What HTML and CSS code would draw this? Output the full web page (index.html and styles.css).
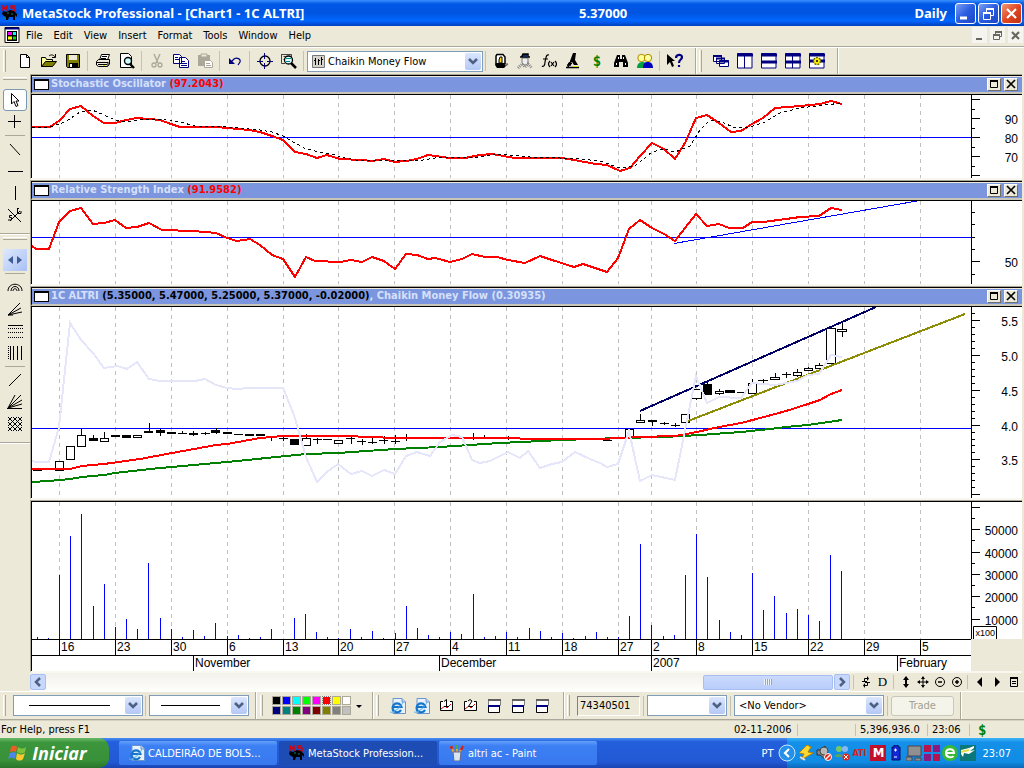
FILE: index.html
```html
<!DOCTYPE html>
<html lang="en">
  <head>
    <meta charset="UTF-8" />
    <meta name="viewport" content="width=device-width, initial-scale=1.0" />
    <title>MetaStock Professional - [Chart1 - 1C ALTRI]</title>
    <link rel="stylesheet" href="styles.css">
  </head>
  <body>
    <!-- shared icons -->
    <svg class="defs" width="0" height="0">
      <symbol id="chevron" viewBox="0 0 16 16"><path d="M4 6L8 10L12 6" fill="none" stroke="#4d6185" stroke-width="2.6"/></symbol>
      <symbol id="bull" viewBox="0 0 16 16">
        <path d="M1 6V1L3 4L5 1V6M13 1H9V3H13V6H9" fill="none" stroke="#e00000" stroke-width="1.4"/>
        <path d="M1 6L4 7L8 5L12 6L15 9V12L13 10V15H11V12H7L6 15H4V12L2 11L0 9Z" fill="#000"/>
        <path d="M5 8H7M2 12L3 14M9 9H11" stroke="#108080"/>
      </symbol>
      <symbol id="ie" viewBox="0 0 16 16">
        <path d="M3 .5H12L15.500 4V15.500H3Z" fill="#e8f2fd" stroke="#6a94cc"/>
        <path d="M12 .5V4H15.500" fill="#c6dcf5" stroke="#6a94cc"/>
        <circle cx="7" cy="9" r="5" fill="#d4ebfb"/>
        <path d="M11 12A4.500 4.500 0 1 1 11.500 9H3" fill="none" stroke="#1673c8" stroke-width="2.2"/>
        <path d="M0 14C3 16 12 8 13 4" fill="none" stroke="#56aee8"/>
      </symbol>
      <symbol id="win" viewBox="0 0 16 16">
        <path d="M2.500 1.500H14.500V7.500H2.500Z" fill="#fff" stroke="#808080"/><path d="M2 2H15" stroke="#606060" stroke-width="2"/>
        <path d="M2.500 7.500H13.500V14.500H2.500Z" fill="#fff" stroke="#000"/><path d="M2 8H14" stroke="#000080" stroke-width="2"/>
      </symbol>
      <symbol id="max" viewBox="0 0 12 10"><path d="M2.500 1.500H9.500V8.500H2.500Z" fill="none" stroke="#000"/><path d="M2 2H10" stroke="#000" stroke-width="2"/></symbol>
      <symbol id="close" viewBox="0 0 12 10"><path d="M2 1L10 9M10 1L2 9" stroke="#000" stroke-width="1.700"/></symbol>
    </svg>

    <header class="titlebar">
      <svg class="icon"><use href="#bull"/></svg>
      <h1>MetaStock Professional - [Chart1 - 1C ALTRI]</h1>
      <span class="price">5.37000</span>
      <span class="period">Daily</span>
      <div class="winbtns">
        <button type="button" aria-label="Minimize"><svg viewBox="0 0 19 19"><path d="M4 14H11" stroke="#fff" stroke-width="3"/></svg></button>
        <button type="button" aria-label="Restore"><svg viewBox="0 0 19 19"><path d="M7.500 8V4.500H14.500V11.500H12" fill="none" stroke="#fff"/><path d="M7 5H15M4 9H12" stroke="#fff" stroke-width="2"/><path d="M4.500 8.500H11.500V15.500H4.500Z" fill="none" stroke="#fff"/></svg></button>
        <button type="button" class="red" aria-label="Close"><svg viewBox="0 0 19 19"><path d="M5 5L14 14M14 5L5 14" stroke="#fff" stroke-width="2.2"/></svg></button>
      </div>
    </header>

    <nav class="menubar">
      <svg class="icon" viewBox="0 0 16 16"><path d="M1 .5H15V15.500H1Z" fill="#fff" stroke="#000"/><path d="M1 1.500H15" stroke="#000080" stroke-width="2"/><path d="M3 4H13V14H3Z"/><path d="M4 6.500H8" stroke="#f0f" stroke-width="3"/><path d="M9 6.500H12" stroke="#0ff" stroke-width="3"/><path d="M4 11H8" stroke="#ff0" stroke-width="3"/><path d="M9 11H12" stroke="#0d0" stroke-width="3"/></svg>
      <button type="button">File</button>
      <button type="button">Edit</button>
      <button type="button">View</button>
      <button type="button">Insert</button>
      <button type="button">Format</button>
      <button type="button">Tools</button>
      <button type="button">Window</button>
      <button type="button">Help</button>
      <div class="childbtns">
        <button type="button" aria-label="Minimize chart"><svg viewBox="0 0 15 15"><path d="M4 11H10" stroke="#6a675c" stroke-width="2"/></svg></button>
        <button type="button" aria-label="Restore chart"><svg viewBox="0 0 15 15"><path d="M5.500 6V3.500H11.500V8.500H10M3.500 6.500H9.500V11.500H3.500Z" fill="none" stroke="#6a675c"/><path d="M5 4H12M3 7H10" stroke="#6a675c" stroke-width="2"/></svg></button>
        <button type="button" aria-label="Close chart"><svg viewBox="0 0 15 15"><path d="M4 4L11 11M11 4L4 11" stroke="#6a675c" stroke-width="2.2"/></svg></button>
      </div>
    </nav>

    <div class="toolbar main-tools">
      <div class="band">
        <i class="grip"></i>
        <button type="button" aria-label="New"><svg viewBox="0 0 16 16"><path d="M3.500 1.500H9.500L12.500 4.500V14.500H3.500Z" fill="#fff" stroke="#000"/><path d="M9.500 1.500V4.500H12.500" fill="none" stroke="#000"/></svg></button>
        <button type="button" aria-label="Open"><svg viewBox="0 0 16 16"><path d="M.5 13.500V4.500H4.500L5.500 6.500H11.500V8" fill="#ffffa0" stroke="#000"/><path d="M.5 13.500L4.500 8.500H15.500L11.500 13.500Z" fill="#808000" stroke="#000"/><path d="M8 3C10 1 13 2 14 4M14.500 1V4.500H11" fill="none" stroke="#000"/></svg></button>
        <button type="button" aria-label="Save"><svg viewBox="0 0 16 16"><path d="M1.500 1.500H14.500V14.500H2.500L1.500 13.500Z" fill="#808000" stroke="#000"/><path d="M4 2H12V7H4Z" fill="#ece9d8"/><path d="M4 10H13V15H4Z"/><path d="M5 11H7V14H5Z" fill="#fff"/></svg></button>
        <i class="sep"></i>
        <button type="button" aria-label="Print"><svg viewBox="0 0 16 16"><path d="M4.500 7L6.500 1.500H14.500L12.500 7" fill="#fff" stroke="#000"/><path d="M1.500 8.500L3.500 6.500H14.500V11L12.500 13.500H3.500L1.500 12Z" fill="#ece9d8" stroke="#000"/><path d="M2 9.500H13M3 11.500H12M13 9V13" stroke="#000"/><path d="M7 3.500H12M6 5.500H11" stroke="#000"/><path d="M8 12.500H10" stroke="#dd0"/></svg></button>
        <button type="button" aria-label="Print Preview"><svg viewBox="0 0 16 16"><path d="M1.500 .5H9.500L12.500 3.500V14.500H1.500Z" fill="#fff" stroke="#000"/><circle cx="9" cy="8" r="3.500" fill="#cff" stroke="#000" stroke-width="1.4"/><path d="M11 11L15 15" stroke="#000" stroke-width="2.400"/></svg></button>
        <i class="sep"></i>
        <button type="button" disabled aria-label="Cut"><svg viewBox="0 0 16 16"><path d="M5 1L9 10M11 1L7 10" stroke="#aca899" stroke-width="1.4"/><circle cx="5" cy="12" r="2" fill="none" stroke="#aca899" stroke-width="1.300"/><circle cx="11" cy="12" r="2" fill="none" stroke="#aca899" stroke-width="1.300"/></svg></button>
        <button type="button" aria-label="Copy"><svg viewBox="0 0 16 16"><path d="M.5 1.500H6.500L8.500 3.500V10.500H.5ZM6.500 4.500H12.500L15.500 7.500V14.500H6.500Z" fill="#fff" stroke="#000080"/><path d="M2 4.500H5M2 6.500H6M8 8.500H12M8 10.500H14M8 12.500H14" stroke="#000080"/></svg></button>
        <button type="button" disabled aria-label="Paste"><svg viewBox="0 0 16 16"><path d="M1 2H13V13H1Z" fill="#aca899"/><path d="M4 1H10V4H4Z" fill="#ece9d8" stroke="#aca899"/><path d="M7.500 7.500H13.500L15.500 9.500V14.500H7.500Z" fill="#fff" stroke="#aca899"/><path d="M9 10.500H13M9 12.500H14" stroke="#aca899"/></svg></button>
        <i class="sep"></i>
        <button type="button" aria-label="Undo"><svg viewBox="0 0 16 16"><path d="M4 9L7 6C10 4 14 6 13 9L11 12" fill="none" stroke="#000080" stroke-width="1.200"/><path d="M2 5V11H8Z" fill="#000080"/></svg></button>
        <i class="sep"></i>
        <button type="button" aria-label="Crosshair"><svg viewBox="0 0 16 16"><circle cx="8" cy="8" r="5" fill="none" stroke="#000" stroke-width="1.300"/><path d="M7.500 0V6M7.500 10V16M0 8.500H6M10 8.500H16" stroke="#000080"/></svg></button>
        <button type="button" aria-label="Zoom box"><svg viewBox="0 0 16 16"><path d="M.5 1.500H10.500V4M.5 1V10.500H4M2.500 3.500H6M2.500 6.500H4" fill="none" stroke="#444"/><circle cx="7.500" cy="7" r="4" fill="#dff" stroke="#000" stroke-width="1.300"/><path d="M5 5.500H10M5 8.500H9" stroke="#088"/><path d="M10 10L15 15" stroke="#000" stroke-width="2.500"/></svg></button>
        <i class="sep"></i>
        <label class="combo indicator">
          <svg class="comboicon" viewBox="0 0 13 13"><path d="M.5 .5H12.500V12.500H.5Z" fill="#d6d3ca" stroke="#777"/><path d="M3.500 3V10M6.500 4V10M9.500 2V10M2 5.500H4M6 5.500H8M9 4.500H11" stroke="#000" fill="none"/></svg>
          <select aria-label="Indicator"><option>Chaikin Money Flow</option></select>
          <span class="drop"><svg><use href="#chevron"/></svg></span>
        </label>
        <i class="sep"></i>
        <button type="button" aria-label="The Explorer"><svg viewBox="0 0 16 16"><path d="M4 1.500H10L12 4V11L10 13H5L3 11V3Z" fill="#fff" stroke="#000" stroke-width="1.500"/><path d="M3 10H12L14 12L11 15H4L2 12Z"/><path d="M7 4H9V10H6V7Z" fill="#fd0" stroke="#000"/><path d="M12 12L15 11" stroke="#777" stroke-width="2"/></svg></button>
        <button type="button" aria-label="Expert Advisor"><svg viewBox="0 0 16 16"><path d="M5 5H11V10L9 12H7L5 10Z" fill="#eee" stroke="#777"/><path d="M3 4H13M5 3H11V1H6Z" stroke="#000" stroke-width="1.500"/><path d="M6 3H11" stroke="#2050c0"/><path d="M1 15L5 11L8 14L11 11L15 15" fill="none" stroke="#888" stroke-dasharray="1 1" stroke-width="3"/></svg></button>
        <button type="button" aria-label="Indicator Builder"><svg viewBox="0 0 16 16"><path d="M8 2C5 1 5 5 4 9C4 13 2 14 1 13M2 6H7M9 8C7 10 7 12 9 14M14 8C16 10 16 12 14 14M10 9L13 13M13 9L10 13" fill="none" stroke="#000" stroke-width="1.200"/></svg></button>
        <button type="button" aria-label="System Tester"><svg viewBox="0 0 16 16"><path d="M8 0H11L10 7L13 12H9L7 9L5 10V8Z"/><path d="M3 10.500H7M2 12H6M1 14.500H14M5 9L3 14" stroke="#000" stroke-width="1.500"/><path d="M8 13.500H13" stroke="#dd0"/></svg></button>
        <button type="button" aria-label="Option Scope"><b class="dollar">$</b></button>
        <button type="button" aria-label="Find"><svg viewBox="0 0 16 16"><path d="M4 2H7V6H9V2H12L15 10V14H10V9H6V14H1V10Z"/><path d="M3.500 10V12M12.500 10V12M5.500 4V6M10.500 4V6" stroke="#fff"/></svg></button>
        <button type="button" aria-label="Advisors"><svg viewBox="0 0 16 16"><path d="M0 15C0 10 3 9 6 9C9 9 10 12 10 15Z" fill="#00a040"/><path d="M6 15C6 10 8 9 11 9C14 9 16 11 16 15Z" fill="#0000c0"/><circle cx="4.500" cy="5" r="3.700" fill="#ff9" stroke="#aa8800"/><circle cx="11" cy="5" r="3.700" fill="#ff9" stroke="#aa8800"/></svg></button>
        <i class="sep"></i>
        <button type="button" aria-label="Context help"><svg viewBox="0 0 16 16"><path d="M0 1V12L3 9L5 14L7 13L5 8H8Z"/><path d="M9 5C9 1 15 1 15 4C15 7 12 6 12 10M12 12V14" fill="none" stroke="#000080" stroke-width="2.200"/></svg></button>
      </div>
      <div class="band">
        <i class="grip"></i>
        <button type="button" aria-label="Cascade"><svg viewBox="0 0 16 16"><path d="M.5 2.500H8.500V8.500H.5ZM3.500 5.500H11.500V10.500H3.500ZM6.500 7.500H15.500V13.500H6.500Z" fill="#fff" stroke="#000080"/><path d="M0 3H9M3 5.500H12M6 8.500H16" stroke="#000080" stroke-width="2"/></svg></button>
        <button type="button" aria-label="Columns"><svg viewBox="0 0 16 16"><path d="M.5 .5H15V15H.5ZM7.500 2V15" fill="#fff" stroke="#000080"/><path d="M0 2H16" stroke="#000080" stroke-width="3"/></svg></button>
        <button type="button" aria-label="Rows"><svg viewBox="0 0 16 16"><path d="M.5 .5H15V15H.5Z" fill="#fff" stroke="#000080"/><path d="M0 2H16M0 9H16" stroke="#000080" stroke-width="3"/></svg></button>
        <button type="button" aria-label="Tile"><svg viewBox="0 0 16 16"><path d="M.5 .5H15V15H.5ZM7.500 1V15" fill="#fff" stroke="#000080"/><path d="M0 2H16M0 9H16" stroke="#000080" stroke-width="3"/></svg></button>
        <button type="button" aria-label="Layout options"><svg viewBox="0 0 16 16"><path d="M.5 .5H15V15H.5Z" fill="#fff" stroke="#000080"/><path d="M0 2H16M0 8H16" stroke="#000080" stroke-width="3"/><circle cx="8" cy="8" r="3.500" fill="#fe0" stroke="#660" stroke-width="1.500" stroke-dasharray="2 1"/><circle cx="8" cy="8" r="1"/></svg></button>
      </div>
    </div>

    <main class="workspace">
      <aside class="sidebar">
        <div class="tools">
          <i class="grip-h"></i>
          <button type="button" class="picked" aria-label="Select"><svg viewBox="0 0 16 16"><path d="M4.500 1.500V12L7 9.500L9 14.500L11 13.500L9 9H12Z" fill="#fff" stroke="#000"/></svg></button>
          <button type="button" aria-label="Cross"><svg viewBox="0 0 16 16"><path d="M7.500 1V14M1 7.500H14" stroke="#000"/></svg></button>
          <i class="sep-h"></i>
          <button type="button" aria-label="Trendline"><svg viewBox="0 0 16 16"><path d="M3 3L13 14" stroke="#000"/></svg></button>
          <button type="button" aria-label="Horizontal line"><svg viewBox="0 0 16 16"><path d="M1 8.500H16" stroke="#000"/></svg></button>
          <button type="button" aria-label="Vertical line"><svg viewBox="0 0 16 16"><path d="M8.500 1V15" stroke="#000"/></svg></button>
          <button type="button" aria-label="Stop loss"><svg viewBox="0 0 16 16"><path d="M1 2L14 15M3 14L13 4M10 1.500H12M10.500 1V6.500H14V4M5 8.500H2.500V10.500H4.500V13H1" fill="none" stroke="#000"/></svg></button>
        </div>
        <div class="tools">
          <i class="grip-h"></i>
          <button type="button" class="blue" aria-label="Scroll"><svg viewBox="0 0 16 16"><path d="M6 4V12L1 8ZM10 4V12L15 8Z" fill="#3f5b94"/></svg></button>
          <i class="sep-h"></i>
          <button type="button" aria-label="Arcs"><svg viewBox="0 0 16 16"><path d="M1 12C1 3 15 3 15 12M4 12C4 6 12 6 12 12M6 12C6 9 10 9 10 12" fill="none" stroke="#000"/></svg></button>
          <button type="button" aria-label="Fan"><svg viewBox="0 0 16 16"><path d="M1 14L13 2M1 14L14 7M1 14L15 11M1 14H6" stroke="#000"/></svg></button>
          <button type="button" aria-label="Retracement"><svg viewBox="0 0 16 16"><path d="M1 2.500H16" stroke="#000"/><path d="M1 5.500H16M1 9.500H16M1 14.500H16" stroke="#000" stroke-dasharray="1 1"/></svg></button>
          <button type="button" aria-label="Time zones"><svg viewBox="0 0 16 16"><path d="M1.500 1V15" stroke="#000" stroke-dasharray="1 1"/><path d="M3.500 1V15M6.500 1V15M10.500 1V15M14.500 1V15" stroke="#000"/></svg></button>
          <i class="sep-h"></i>
          <button type="button" aria-label="Gann line"><svg viewBox="0 0 16 16"><path d="M2 14L14 2" stroke="#000"/></svg></button>
          <button type="button" aria-label="Gann fan"><svg viewBox="0 0 16 16"><path d="M1 14L8 1M1 14L14 1M1 14L15 6M1 14L15 10M0 14.500H15" stroke="#000"/></svg></button>
          <button type="button" aria-label="Gann grid"><svg viewBox="0 0 16 16"><path d="M1 11L5 15M1 6L10 15M1 1L15 15M6 1L15 10M11 1L15 5M5 1L1 5M10 1L1 10M15 1L1 15M15 6L6 15M15 11L11 15" stroke="#000"/></svg></button>
        </div>
      </aside>

      <div class="charts">
        <section class="panel">
          <div class="caption">
            <i class="mini"></i>
            <h2>Stochastic Oscillator <em>(97.2043)</em></h2>
            <button type="button" aria-label="Maximize"><svg><use href="#max"/></svg></button>
            <button type="button" aria-label="Close"><svg><use href="#close"/></svg></button>
          </div>
          <div class="plot small">
            <svg class="graph" viewBox="32 95 939 83" preserveAspectRatio="none">
              <path class="grid" d="M59.500 95V178M115.500 95V178M171.500 95V178M227.500 95V178M283.500 95V178M338.500 95V178M394.500 95V178M450.500 95V178M506.500 95V178M562.500 95V178M618.500 95V178M651.500 95V178M696.500 95V178M752.500 95V178M808.500 95V178M864.500 95V178M920.500 95V178"/>
              <path class="level" d="M32 137.500H971"/>
              <polyline class="red-line" points="32,127 50,127 60,120 70,109 81,106 93,116 104,123 115,123 126,120 137,118 149,119 160,120 171,124 180,127 216,127 227,128 249,130 260,132 272,136 283,140 295,152 306,154 317,158 327,155 340,159 362,160 372,161 384,159 395,162 406,161 417,159 428,155 450,158 465,158 480,155 492,154 515,158 562,158 574,160 596,164 607,165 620,171 630,168 640,156 652,143 664,149 675,159 685,143 696,118 707,115 719,123 731,132 741,131 752,124 763,118 775,108 800,106 820,104 831,101 842,104"/>
              <polyline class="signal" points="32,127 50,127 65,122 80,112 92,110 104,115 115,120 127,122 140,120 165,119 180,122 195,126 227,127 260,130 272,132 283,136 295,143 306,149 320,152 335,155 345,158 362,161 384,160 400,160 417,161 435,158 455,157 480,157 500,154 530,157 560,158 580,159 600,161 620,168 635,166 652,152 664,149 675,152 690,146 700,130 710,120 722,122 735,128 750,127 765,122 780,113 800,108 842,103"/>
            </svg>
            <svg class="axis" viewBox="971 95 51 83">
              <path d="M971.500 95V178M971 99.500H980M971 109.500H975M971 118.500H980M971 128.500H975M971 137.500H980M971 147.500H975M971 156.500H980M971 166.500H975M971 175.500H980"/>
              <text x="1018" y="124">90</text><text x="1018" y="143">80</text><text x="1018" y="162">70</text>
            </svg>
          </div>
        </section>

        <section class="panel">
          <div class="caption">
            <i class="mini"></i>
            <h2>Relative Strength Index <em>(91.9582)</em></h2>
            <button type="button" aria-label="Maximize"><svg><use href="#max"/></svg></button>
            <button type="button" aria-label="Close"><svg><use href="#close"/></svg></button>
          </div>
          <div class="plot small">
            <svg class="graph" viewBox="32 201 939 83" preserveAspectRatio="none">
              <path class="grid" d="M59.500 201V284M115.500 201V284M171.500 201V284M227.500 201V284M283.500 201V284M338.500 201V284M394.500 201V284M450.500 201V284M506.500 201V284M562.500 201V284M618.500 201V284M651.500 201V284M696.500 201V284M752.500 201V284M808.500 201V284M864.500 201V284M920.500 201V284"/>
              <path class="level" d="M32 237.500H971"/>
              <path class="level" d="M674 243.500L917 201"/>
              <polyline class="red-line" points="32,246 36,249 49,249 59,222 70,211 81,208 93,224 104,223 115,220 126,228 137,227 149,223 162,230 193,231 205,232 216,233 227,238 237,241 250,239 260,245 272,255 283,259 295,277 306,257 315,261 340,262 351,260 362,262 372,257 384,261 395,269 406,254 417,255 428,259 435,258 450,262 462,259 472,254 485,257 497,257 508,260 525,263 540,256 552,260 574,267 583,264 607,272 618,258 629,229 640,220 652,228 664,234 675,241 685,228 696,214 707,226 719,224 729,228 743,228 752,222 763,222 786,219 800,217 819,216 831,208 842,210"/>
            </svg>
            <svg class="axis" viewBox="971 201 51 83">
              <path d="M971.500 201V284M971 212.500H975M971 224.500H975M971 237.500H975M971 249.500H975M971 261.500H980M971 274.500H975"/>
              <text x="1018" y="267">50</text>
            </svg>
          </div>
        </section>

        <section class="panel">
          <div class="caption">
            <i class="mini"></i>
            <h2>1C ALTRI <strong>(5.35000, 5.47000, 5.25000, 5.37000, -0.02000)</strong>, Chaikin Money Flow (0.30935)</h2>
            <button type="button" aria-label="Maximize"><svg><use href="#max"/></svg></button>
            <button type="button" aria-label="Close"><svg><use href="#close"/></svg></button>
          </div>
          <div class="plot tall">
            <svg class="graph" viewBox="32 307 939 191" preserveAspectRatio="none">
              <path class="grid" d="M59.500 307V498M115.500 307V498M171.500 307V498M227.500 307V498M283.500 307V498M338.500 307V498M394.500 307V498M450.500 307V498M506.500 307V498M562.500 307V498M618.500 307V498M651.500 307V498M696.500 307V498M752.500 307V498M808.500 307V498M864.500 307V498M920.500 307V498"/>
              <path class="level" d="M32 428.500H971"/>
              <!-- wicks and thin bodies -->
              <path class="wick" d="M33 470.500H42M81.500 429V435M93.500 435V439M104.500 432V438M149.500 423V433M160.500 429V436M182.500 431V434M193.500 431V436M205.500 432V435M216.500 428V434M178 433.500H187M201 433.500H210M234 434.500H243M268 437.500H277M271.500 436V441M279 438.500H288M283.500 437V441M306.500 434V438M313 439.500H322M317.500 438V444M323 439.500H332M346 438.500H355M351.500 436V444M357 441.500H366M362.500 439V445M368 442.500H377M372.500 438V444M379 440.500H388M384.500 436V444M395.500 435V444M391 441.500H400M406.500 434V441M402 438.500H411M413 437.500H422M424 438.500H433M436 437.500H445M458 437.500H467M473.500 433V440M469 437.500H478M480 437.500H489M484.500 435V439M491 438.500H500M502 437.500H511M508.500 436V440M514 438.500H523M548 438.500H557M581 439.500H590M603 440.500H612M640.500 414V420M652.500 420V426M660 423.500H669M664.500 422V425M671 425.500H680M675.500 423V427M696.500 398V400M707.500 381V384M719.500 389V395M737 392.500H746M752.500 379V383M758 380.500H768M763.500 379V383M775.500 373V377M786.500 372V378M782 374.500H791M797.500 369V377M808.500 367V371M819.500 363V370M842.500 323V337"/>
              <path class="full" d="M89 438H98V441H89ZM111 435H120V437H111ZM122 435H131V438H122ZM144 431H153V433H144ZM156 430H165V433H156ZM167 432H176V434H167ZM189 433H198V435H189ZM211 430H220V433H211ZM223 432H232V434H223ZM245 434H254V436H245ZM256 434H265V436H256ZM290 439H299V445H290ZM648 420H657V422H648ZM703 384H712V395H703ZM725 390H735V393H725Z"/>
              <path class="hollow" d="M55.500 461.500H63.500V470.500H55.500ZM66.500 446.500H74.500V459.500H66.500ZM77.500 435.500H85.500V446.500H77.500ZM100.500 438.500H108.500V441.500H100.500ZM133.500 435.500H141.500V437.500H133.500ZM302.500 438.500H310.500V445.500H302.500ZM334.500 440.500H342.500V443.500H334.500ZM625.500 429.500H633.500V438.500H625.500ZM636.500 420.500H644.500V422.500H636.500ZM681.500 414.500H689.500V422.500H681.500ZM692.500 389.500H701.500V398.500H692.500ZM715.500 391.500H723.500V393.500H715.500ZM748.500 383.500H756.500V393.500H748.500ZM770.500 377.500H779.500V379.500H770.500ZM793.500 372.500H801.500V375.500H793.500ZM804.500 368.500H812.500V370.500H804.500ZM815.500 365.500H823.500V368.500H815.500ZM826.500 328.500H835.500V363.500H826.500ZM837.500 329.500H846.500V331.500H837.500Z"/>
              <path class="navy-line" d="M640 411L876 307"/>
              <path class="olive-line" d="M688 421L965 314"/>
              <polyline class="green-line" points="32,482 49,481 70,479 82,477 104,475 115,473 150,469 227,462 306,454 338,453 395,449 440,447 500,443 562,440 620,438 664,437 700,435 741,432 770,429 786,427 808,425 842,420"/>
              <polyline class="red-line" points="32,469 70,469 82,466 104,464 140,459 172,453 216,445 227,444 260,438 283,436 345,436 395,438 440,438 600,439 640,437 675,436 697,432 719,427 741,423 764,417 786,411 808,404 820,400 831,394 842,390"/>
              <polyline class="flow-line" points="32,461 36,462 49,462 59,427 70,323 81,340 93,353 104,368 117,366 127,369 137,362 149,379 160,381 195,381 205,379 216,385 227,388 237,389 250,388 283,388 294,415 306,457 317,482 327,472 338,464 351,474 362,471 372,476 384,470 395,474 406,456 417,452 430,456 440,442 452,435 462,437 472,460 480,463 490,461 508,452 520,458 528,451 540,468 552,464 562,462 575,452 590,459 600,463 607,467 618,464 629,431 640,481 652,475 675,480 696,376 707,403 719,397 741,398 752,383 775,385 797,381 808,375 819,374 831,355 842,357"/>
            </svg>
            <svg class="axis" viewBox="971 307 51 191">
              <path d="M971.500 307V498M971 313.500H975M971 320.500H980M971 327.500H975M971 334.500H975M971 341.500H975M971 348.500H975M971 355.500H980M971 362.500H975M971 369.500H975M971 376.500H975M971 383.500H975M971 390.500H980M971 397.500H975M971 404.500H975M971 411.500H975M971 418.500H975M971 425.500H980M971 432.500H975M971 439.500H975M971 445.500H975M971 452.500H975M971 459.500H980M971 466.500H975M971 473.500H975M971 480.500H975M971 487.500H975M971 494.500H980"/>
              <text x="1018" y="326">5.5</text><text x="1018" y="361">5.0</text><text x="1018" y="396">4.5</text><text x="1018" y="431">4.0</text><text x="1018" y="465">3.5</text>
            </svg>
          </div>
        </section>

        <section class="panel volume">
          <div class="plot mid">
            <svg class="graph" viewBox="32 502 939 137" preserveAspectRatio="none">
              <path class="grid" d="M59.500 502V639M115.500 502V639M171.500 502V639M227.500 502V639M283.500 502V639M338.500 502V639M394.500 502V639M450.500 502V639M506.500 502V639M562.500 502V639M618.500 502V639M651.500 502V639M696.500 502V639M752.500 502V639M808.500 502V639M864.500 502V639M920.500 502V639"/>
              <path class="level" d="M37.500 639V637M48.500 639V638M59.500 639V575M70.500 639V536M81.500 639V514M93.500 639V606M104.500 639V584M115.500 639V627M126.500 639V619M137.500 639V629M148.500 639V563M160.500 639V618M171.500 639V629M182.500 639V637M193.500 639V630M204.500 639V636M215.500 639V623M227.500 639V636M238.500 639V635M249.500 639V638M260.500 639V637M271.500 639V629M294.500 639V618M305.500 639V614M316.500 639V632M327.500 639V637M338.500 639V638M350.500 639V629M361.500 639V637M372.500 639V631M383.500 639V638M395.500 639V633M406.500 639V606M417.500 639V628M428.500 639V635M439.500 639V637M450.500 639V632M461.500 639V634M473.500 639V594M484.500 639V637M495.500 639V636M506.500 639V632M517.500 639V637M529.500 639V628M540.500 639V631M551.500 639V637M562.500 639V633M573.500 639V638M585.500 639V636M596.500 639V632M607.500 639V637M618.500 639V637M629.500 639V616M640.500 639V544M651.500 639V625M663.500 639V636M674.500 639V635M685.500 639V575M696.500 639V534M707.500 639V577M719.500 639V620M730.500 639V632M741.500 639V635M752.500 639V573M763.500 639V610M774.500 639V596M786.500 639V613M797.500 639V609M808.500 639V615M819.500 639V621M830.500 639V555M841.500 639V571"/>
            </svg>
            <svg class="axis" viewBox="971 502 51 137">
              <path d="M971.500 502V639M971 507.500H980M971 518.500H975M971 529.500H980M971 540.500H975M971 552.500H980M971 563.500H975M971 574.500H980M971 585.500H975M971 596.500H980M971 607.500H975M971 619.500H980"/>
              <text x="1018" y="535">50000</text><text x="1018" y="558">40000</text><text x="1018" y="580">30000</text><text x="1018" y="602">20000</text><text x="1018" y="625">10000</text>
              <path class="box" d="M973.500 640V626.500H996.500V640"/><text class="scale" x="995" y="636">x100</text>
            </svg>
          </div>
          <div class="dates">
            <span></span><span>16</span><span>23</span><span>30</span><span>6</span><span>13</span><span>20</span><span>27</span><span>4</span><span>11</span><span>18</span><span>27</span><span>2</span><span>8</span><span>15</span><span>22</span><span>29</span><span>5</span>
          </div>
          <div class="dates months">
            <span></span><span>November</span><span>December</span><span>2007</span><span>February</span>
          </div>
        </section>

        <div class="scrollrow">
          <div class="scrollbar">
            <button type="button" aria-label="Scroll left"><svg viewBox="0 0 16 16"><path d="M10 4L6 8L10 12" fill="none" stroke="#4d6185" stroke-width="2.500"/></svg></button>
            <div class="track"><div class="thumb"><i></i></div></div>
            <button type="button" aria-label="Scroll right"><svg viewBox="0 0 16 16"><path d="M6 4L10 8L6 12" fill="none" stroke="#4d6185" stroke-width="2.500"/></svg></button>
          </div>
          <div class="chart-tools">
            <i class="sep"></i>
            <button type="button" aria-label="Refresh"><svg viewBox="0 0 12 12"><path d="M4.500 6V2.500H7M7.500 6V9.500H5M2 5.500H7M5 6.500H10" fill="none" stroke="#000"/><path d="M7 0V5L9 2.500ZM5 7V12L3 9.500Z"/></svg></button>
            <button type="button" class="serif">D</button>
            <i class="sep"></i>
            <button type="button" aria-label="Rescale"><svg viewBox="0 0 12 12"><path d="M6 1V11" stroke="#000" stroke-width="2"/><path d="M6 0L9 4H3ZM6 12L9 8H3Z"/></svg></button>
            <button type="button" aria-label="Move"><svg viewBox="0 0 12 12"><path d="M6 1V11M1 6H11" stroke="#000"/><path d="M6 0L8 3H4ZM6 12L8 9H4ZM0 6L3 4V8ZM12 6L9 4V8Z"/></svg></button>
            <button type="button" aria-label="Zoom out"><svg viewBox="0 0 12 12"><circle cx="6" cy="6" r="4.500" fill="none" stroke="#000"/><path d="M4 6H8" stroke="#000" stroke-width="1.500"/></svg></button>
            <button type="button" aria-label="Zoom in"><svg viewBox="0 0 12 12"><circle cx="6" cy="6" r="4.500" fill="none" stroke="#000"/><path d="M4 6H8M6 4V8" stroke="#000" stroke-width="1.500"/></svg></button>
            <i class="sep"></i>
            <button type="button" aria-label="Previous"><svg viewBox="0 0 12 12"><path d="M8 1V11L3 6Z"/></svg></button>
            <button type="button" aria-label="Next"><svg viewBox="0 0 12 12"><path d="M4 1V11L9 6Z"/></svg></button>
            <button type="button" aria-label="Data window"><svg viewBox="0 0 12 12"><path d="M2.500 1.500H9.500V10.500H2.500ZM4 5.500H8M4 7.500H8" fill="none" stroke="#000"/><path d="M2 2H10" stroke="#000" stroke-width="2"/></svg></button>
          </div>
        </div>
      </div>
    </main>

    <div class="toolbar bottom-tools">
      <div class="band">
        <i class="grip"></i>
        <label class="combo style"><select aria-label="Line style"><option></option></select><span class="drop"><svg><use href="#chevron"/></svg></span></label>
        <i class="sep"></i>
        <label class="combo weight"><select aria-label="Line weight"><option></option></select><span class="drop"><svg><use href="#chevron"/></svg></span></label>
      </div>
      <div class="band colors">
        <i class="grip"></i>
        <div class="palette">
          <button type="button" class="black" aria-label="Black"></button><button type="button" class="pure-blue" aria-label="Blue"></button><button type="button" class="cyan" aria-label="Cyan"></button><button type="button" class="lime" aria-label="Lime"></button><button type="button" class="magenta" aria-label="Magenta"></button><button type="button" class="pure-red" aria-label="Red"></button><button type="button" class="yellow" aria-label="Yellow"></button><button type="button" class="white" aria-label="White"></button>
          <button type="button" class="navy" aria-label="Navy"></button><button type="button" class="teal" aria-label="Teal"></button><button type="button" class="green" aria-label="Green"></button><button type="button" class="purple" aria-label="Purple"></button><button type="button" class="maroon" aria-label="Maroon"></button><button type="button" class="olive" aria-label="Olive"></button><button type="button" class="gray" aria-label="Gray"></button><button type="button" class="silver" aria-label="Silver"></button>
        </div>
        <button type="button" class="more" aria-label="More colors"><svg viewBox="0 0 12 12"><path d="M3 5H9L6 8Z"/></svg></button>
      </div>
      <div class="band web">
        <i class="grip"></i>
        <button type="button" aria-label="Web page"><svg><use href="#ie"/></svg></button>
        <button type="button" aria-label="Web page two"><svg><use href="#ie"/></svg></button>
        <button type="button" aria-label="Chart one"><svg viewBox="0 0 16 16"><path d="M5 3.500H2.500V12.500H14.500V3.500H12" fill="#fff" stroke="#000"/><path d="M3 11L7 8L9 10L13 6" fill="none" stroke="#e00000"/><path d="M6 3.500L8.500 1.500V8M6 8.500H11" fill="none" stroke="#000"/></svg></button>
        <button type="button" aria-label="Chart two"><svg viewBox="0 0 16 16"><path d="M5 3.500H2.500V12.500H14.500V3.500H12" fill="#fff" stroke="#000"/><path d="M3 11L7 8L9 10L13 6" fill="none" stroke="#e00000"/><path d="M6 3L8 1.500L10 3L6.500 8.500H11" fill="none" stroke="#000"/></svg></button>
        <button type="button" aria-label="Window one"><svg><use href="#win"/></svg></button>
        <button type="button" aria-label="Window two"><svg><use href="#win"/></svg></button>
        <button type="button" aria-label="Window three"><svg><use href="#win"/></svg></button>
      </div>
      <div class="band trade">
        <i class="grip"></i>
        <input type="text" class="code" value="74340501" readonly aria-label="Code" />
        <i class="sep"></i>
        <label class="combo order"><select aria-label="Order"><option></option></select><span class="drop"><svg><use href="#chevron"/></svg></span></label>
        <i class="sep"></i>
        <label class="combo vendor"><select aria-label="Vendor"><option>&lt;No Vendor&gt;</option></select><span class="drop"><svg><use href="#chevron"/></svg></span></label>
        <i class="sep"></i>
        <button type="button" class="trade-btn" disabled>Trade</button>
      </div>
    </div>

    <footer class="statusbar">
      <span class="hint">For Help, press F1</span>
      <span class="date">02-11-2006</span>
      <span class="blank"></span>
      <span class="total">5,396,936.0</span>
      <span class="time">23:06</span>
      <span class="money"><b class="dollar">$</b></span>
    </footer>

    <div class="taskbar">
      <button type="button" class="start">
        <svg viewBox="0 0 20 20"><path d="M3 4C6 2 7 3 9 4L8 9C6 8 4 8 2 9Z" fill="#f25a24"/><path d="M10 4C13 6 15 6 18 4L17 9C14 11 12 11 9 9Z" fill="#7cc13c"/><path d="M2 10C4 9 6 9 8 10L7 16C5 14 3 14 0 16Z" fill="#4f86ee"/><path d="M9 10C12 12 14 12 17 10L15 16C13 18 10 18 8 16Z" fill="#fcc82c"/></svg>
        Iniciar
      </button>
      <button type="button" class="task"><svg><use href="#ie"/></svg>CALDEIRÃO DE BOLS...</button>
      <button type="button" class="task active"><svg><use href="#bull"/></svg>MetaStock Profession...</button>
      <button type="button" class="task"><svg viewBox="0 0 16 16"><path d="M5 8L2 1M8 8L8 0M10 8L14 1" stroke="#e8a030" stroke-width="2"/><path d="M2 1L3 4M14 1L12 5" stroke="#d02020" stroke-width="2.500"/><path d="M8 0V4" stroke="#40b040" stroke-width="2"/><path d="M4 7H12L11 16H5Z" fill="#d8e4ee" stroke="#668"/></svg>altri ac - Paint</button>
      <span class="lang">PT</span>
      <div class="tray">
        <button type="button" class="expand" aria-label="Show hidden icons"><svg viewBox="0 0 18 18"><circle cx="9" cy="9" r="8" fill="#2490ea" stroke="#c8e8ff"/><path d="M11 5L7 9L11 13" fill="none" stroke="#fff" stroke-width="2.200"/></svg></button>
        <svg viewBox="0 0 16 16"><path d="M9 0L1 8L6 9L3 15L15 8L10 7L13 2Z" fill="#fcd830" stroke="#b88000"/><path d="M2 12L7 15" stroke="#dde" stroke-width="2"/></svg>
        <svg viewBox="0 0 16 16"><path d="M1 5H4L9 1V14L4 10H1Z" fill="#888" stroke="#333"/><circle cx="8" cy="6" r="4" fill="#b8b8b8" stroke="#444"/><circle cx="12" cy="12" r="3.500" fill="#e02818" stroke="#fff"/><path d="M10 14L14 10" stroke="#fff" stroke-width="1.500"/></svg>
        <svg viewBox="0 0 16 16"><circle cx="5" cy="4" r="3" fill="#78c860"/><path d="M1 12C1 8 8 8 8 12Z" fill="#58a858"/><circle cx="11" cy="4" r="3" fill="#88b8f0"/><path d="M7 12C7 7 15 7 15 12Z" fill="#5888d8"/><circle cx="12" cy="12" r="3.500" fill="#e02818"/><path d="M10 10L14 14M14 10L10 14" stroke="#fff"/></svg>
        <b class="ati">ATI</b>
        <b class="mcafee">M</b>
        <svg viewBox="0 0 16 16"><path d="M6 0H10V2H12V15H4V2H6Z" fill="#1028d8" stroke="#001060"/><path d="M6 5H9M7.500 3.500V6.500M6 12H9" stroke="#fff"/></svg>
        <svg viewBox="0 0 16 16"><path d="M2 1H15V11H2ZM0 12H6V16H0ZM9 13H15V16H9Z" fill="#909090" stroke="#445"/></svg>
        <svg viewBox="0 0 16 16"><path d="M0 0H7V7H0ZM9 9H16V16H9Z" fill="#b8144c"/><path d="M9 0H16V7H9ZM0 9H7V16H0Z" fill="#8c1880"/></svg>
        <svg viewBox="0 0 16 16"><circle cx="8" cy="8" r="8" fill="#38b838"/><path d="M4 8H12C12 3 4 3 4 8C4 13 10 13 11.500 11" fill="none" stroke="#fff" stroke-width="2"/></svg>
        <svg viewBox="0 0 16 16"><path d="M0 0H16V16H0Z" fill="#0a7878"/><path d="M1 5L9 3L14 1V3L10 6L15 5L9 9L4 8L3 12L1 9Z" fill="#fff"/><path d="M1 7L9 5" stroke="#dd4" stroke-width="2"/></svg>
        <span class="clock">23:07</span>
      </div>
    </div>
  </body>
</html>
```
FILE: styles.css
```css
* {
  box-sizing: border-box;
}
body {
  margin: 0;
  min-height: 100vh;
  display: flex;
  flex-direction: column;
  background-color: #ece9d8;
  font-family: "DejaVu Sans Condensed", "DejaVu Sans", sans-serif;
  font-size: 11px;
  color: black;
}
button {
  border: none;
  padding: 0;
  background: none;
  font: inherit;
  color: inherit;
  display: flex;
  align-items: center;
  justify-content: center;
  flex-shrink: 0;
}
svg {
  display: block;
  width: 16px;
  height: 16px;
  flex-shrink: 0;
}
.defs {
  display: none;
}
h1, h2 {
  margin: 0;
}

/* title bar */
.titlebar {
  height: 26px;
  display: flex;
  align-items: center;
  padding: 0 2px;
  gap: 4px;
  color: white;
  background: linear-gradient(#3a90ff, #0058e6 15%, #0055e0 50%, #0066ff 80%, #0040c0);
  font-family: "Noto Sans", sans-serif;
  font-size: 13px;
  font-weight: bold;
}
.titlebar h1 {
  font-size: 13px;
  width: 553px;
  white-space: nowrap;
}
.period {
  margin-left: auto;
  padding-right: 4px;
}
.winbtns {
  display: flex;
  gap: 2px;
}
.winbtns button {
  width: 21px;
  height: 21px;
  border: 1px solid white;
  border-radius: 3px;
  background: linear-gradient(135deg, #7aa0f4, #2a5be0 50%, #1c48c8);
}
.winbtns svg {
  width: 19px;
  height: 19px;
}
.winbtns .red {
  background: linear-gradient(135deg, #f09878, #e04822 50%, #c03010);
}

/* menu */
.menubar {
  height: 21px;
  display: flex;
  align-items: center;
  padding: 0 1px 2px 4px;
  border-bottom: 1px solid #aca899;
}
.menubar > button {
  padding: 0 5px 0 6px;
}
.childbtns {
  margin-left: auto;
  display: flex;
  gap: 3px;
}
.childbtns button {
  width: 15px;
  height: 16px;
  background-color: #f5f4ee;
}
.childbtns svg {
  width: 15px;
  height: 15px;
}

/* toolbars */
.toolbar {
  display: flex;
  border-top: 1px solid white;
}
.main-tools {
  height: 27px;
}
.band {
  display: flex;
  align-items: center;
  padding: 0 6px 0 3px;
  border-right: 1px solid #aca899;
  box-shadow: 1px 0 white;
}
.main-tools .band {
  padding-right: 8px;
}
.band button {
  width: 24px;
  height: 22px;
}
.grip {
  width: 3px;
  height: 22px;
  margin-right: 7px;
  border-left: 1px solid white;
  border-right: 1px solid #aca899;
}
.sep {
  width: 1px;
  height: 20px;
  margin: 0 3px 0 2px;
  background-color: #c5c2b2;
}
.dollar {
  color: #008000;
  font-family: "DejaVu Sans Mono", monospace;
  font-size: 14px;
}
.combo {
  position: relative;
  display: flex;
  align-items: center;
  height: 21px;
  border: 1px solid #7f9db9;
  background-color: white;
}
.combo select {
  appearance: none;
  flex: 1;
  min-width: 0;
  height: 19px;
  border: none;
  padding: 0 18px 0 4px;
  background: none;
  font: inherit;
}
.drop {
  position: absolute;
  right: 1px;
  top: 1px;
  width: 16px;
  height: 17px;
  border-radius: 2px;
  background: linear-gradient(#dbe6fe, #b4c8f6);
  pointer-events: none;
}
.comboicon {
  width: 13px;
  height: 13px;
  margin-left: 4px;
}
.indicator {
  width: 176px;
}
.indicator select {
  padding-left: 3px;
}

/* left tools */
.workspace {
  display: flex;
  flex: 1;
}
.sidebar {
  width: 30px;
  flex-shrink: 0;
}
.tools {
  display: flex;
  flex-direction: column;
  align-items: center;
  padding: 3px 0 7px;
  border-bottom: 1px solid #aca899;
  box-shadow: 0 1px white;
}
.tools button {
  width: 24px;
  height: 22px;
}
.tools .picked {
  border: 1px solid #7a98af;
  border-radius: 3px;
  background-color: white;
}
.tools .blue {
  background: linear-gradient(135deg, #dfe9ff, #a9c0f4);
}
.grip-h {
  width: 24px;
  height: 3px;
  margin-bottom: 9px;
  border-top: 1px solid white;
  border-bottom: 1px solid #aca899;
}
.sep-h {
  width: 20px;
  height: 1px;
  margin: 2px 0;
  background-color: #aca899;
}

/* charts */
.charts {
  flex: 1;
  min-width: 0;
  padding-right: 2px;
}
.panel {
  border-left: 1px solid #aca899;
  border-top: 1px solid #aca899;
  border-bottom: 2px solid #f8f7f0;
}
.caption {
  display: flex;
  align-items: center;
  gap: 3px;
  height: 19px;
  padding: 0 4px 0 2px;
  border-top: 1px solid black;
  border-left: 1px solid black;
  border-bottom: 2px solid #c9c6b8;
  background-color: #7b96de;
  box-shadow: inset 0 1px #ece9d8;
}
.caption h2 {
  flex: 1;
  font-size: 11px;
  line-height: 14px;
  color: #d6e0fa;
  white-space: nowrap;
}
.caption em {
  font-style: normal;
  color: red;
}
.caption strong {
  color: black;
}
.caption button {
  width: 14px;
  height: 13px;
  border: 1px solid white;
  border-right-color: #716f64;
  border-bottom-color: #716f64;
  background-color: #ece9d8;
}
.caption button svg {
  width: 12px;
  height: 10px;
}
.mini {
  width: 15px;
  height: 11px;
  margin-right: -1px;
  border: 1px solid black;
  border-top-width: 2px;
  background-color: white;
}
.plot {
  display: flex;
  border-top: 1px solid black;
  border-left: 1px solid black;
  background-color: white;
}
.graph {
  flex: 1;
  min-width: 0;
  height: 100%;
}
.axis {
  width: 51px;
  height: 100%;
}
.small {
  height: 84px;
}
.tall {
  height: 192px;
}
.mid {
  height: 138px;
}
.graph path, .graph polyline {
  fill: none;
  stroke: blue;
  vector-effect: non-scaling-stroke;
  shape-rendering: crispEdges;
}
.graph .grid {
  stroke: #c0c0c0;
  stroke-dasharray: 4 4;
}
.graph .red-line {
  stroke: red;
  stroke-width: 2;
}
.graph .green-line {
  stroke: green;
  stroke-width: 2;
}
.graph .navy-line {
  stroke: #000066;
  stroke-width: 2;
}
.graph .olive-line {
  stroke: #8c8c00;
  stroke-width: 2;
}
.graph .flow-line {
  stroke: #e6e6fa;
  stroke-width: 2;
}
.graph .signal {
  stroke: black;
  stroke-dasharray: 3 3;
}
.graph .wick {
  stroke: black;
}
.graph .full {
  fill: black;
  stroke: none;
}
.graph .hollow {
  fill: white;
  stroke: black;
}
.axis path {
  fill: none;
  stroke: black;
}
.axis .box {
  fill: white;
}
.axis text {
  font-family: "Liberation Sans", sans-serif;
  font-size: 12px;
  text-anchor: end;
}
.axis .scale {
  font-size: 9px;
}
.dates {
  display: grid;
  grid-template-columns: 27fr 56fr 56fr 56fr 56fr 55fr 56fr 56fr 56fr 56fr 56fr 33fr 45fr 56fr 56fr 56fr 56fr 51fr;
  height: 16px;
  margin-right: 51px;
  border-top: 1px solid black;
  border-left: 1px solid black;
  background-color: white;
  font-family: "Liberation Sans", sans-serif;
  font-size: 12px;
  line-height: 15px;
}
.dates span {
  min-width: 0;
  padding-left: 1px;
}
.dates span + span {
  border-left: 1px solid black;
}
.months {
  grid-template-columns: 161fr 246fr 212fr 246fr 74fr;
}

/* scroll bar */
.scrollrow {
  display: flex;
  height: 18px;
}
.scrollbar {
  flex: 1;
  display: flex;
  align-items: center;
  background: linear-gradient(#f3f1ec, #fefefb);
}
.scrollbar button {
  width: 16px;
  height: 16px;
  border: 1px solid #a8bef0;
  border-radius: 2px;
  background-color: #c8d8fc;
}
.track {
  flex: 1;
  display: flex;
  justify-content: flex-end;
}
.thumb {
  width: 130px;
  height: 15px;
  margin-right: 1px;
  display: flex;
  align-items: center;
  justify-content: center;
  border: 1px solid #a8bef0;
  border-radius: 2px;
  background: linear-gradient(#cbdafd, #b9cdfa);
}
.thumb i {
  width: 8px;
  height: 6px;
  background: repeating-linear-gradient(90deg, #eef4fe 0 1px, #8ca6e0 1px 2px);
}
.chart-tools {
  display: flex;
  align-items: center;
  padding-left: 1px;
}
.chart-tools button {
  width: 17px;
  height: 16px;
}
.chart-tools svg {
  width: 12px;
  height: 12px;
}
.chart-tools .sep {
  height: 14px;
}
.chart-tools .serif {
  font-family: "Liberation Serif", serif;
  font-size: 13px;
}

/* bottom tools */
.bottom-tools {
  height: 29px;
  border-bottom: 1px solid #aca899;
}
.bottom-tools .grip {
  height: 21px;
}
.style {
  width: 130px;
}
.weight {
  width: 100px;
}
.style select {
  background: linear-gradient(black, black) 15px 9px / 81px 1px no-repeat;
}
.weight select {
  background: linear-gradient(black, black) 11px 9px / 59px 1px no-repeat;
}
.colors {
  padding-left: 4px;
}
.bottom-tools .colors .grip {
  margin-right: 8px;
}
.palette {
  display: grid;
  grid-template-columns: repeat(8, 9px);
  gap: 1px;
  padding: 1px;
}
.palette button {
  width: 9px;
  height: 9px;
  border: 1px solid #aca899;
}
.band .more {
  width: 14px;
}
.more svg {
  width: 12px;
  height: 12px;
}
.black { background-color: black; }
.pure-blue { background-color: blue; }
.cyan { background-color: cyan; }
.lime { background-color: lime; }
.magenta { background-color: magenta; }
.pure-red { background-color: red; }
.yellow { background-color: yellow; }
.white { background-color: white; }
.navy { background-color: navy; }
.teal { background-color: teal; }
.green { background-color: green; }
.purple { background-color: purple; }
.maroon { background-color: maroon; }
.olive { background-color: olive; }
.gray { background-color: gray; }
.silver { background-color: silver; }
.palette .pure-red {
  border: 1px dotted #808080;
  background-clip: padding-box;
}
.web {
  padding-right: 9px;
}
.trade .sep {
  margin: 0 3px;
}
.code {
  width: 63px;
  height: 20px;
  padding: 0 2px;
  border: 1px solid #808080;
  border-right-color: white;
  border-bottom-color: white;
  background-color: #ece9d8;
  font: inherit;
}
.order {
  width: 80px;
}
.vendor {
  width: 150px;
}
.band .trade-btn {
  width: 63px;
  height: 20px;
  border: 1px solid #c9c7ba;
  border-radius: 3px;
  background-color: #f5f4ea;
  color: #a1a192;
}

/* status bar */
.statusbar {
  display: flex;
  align-items: center;
  height: 18px;
  border-top: 1px solid #d6d2c2;
}
.statusbar span {
  height: 12px;
  line-height: 12px;
  padding-left: 4px;
  border-right: 1px solid #c5c2b2;
}
.statusbar .hint {
  flex: 1;
  padding-left: 1px;
  border: none;
}
.date {
  width: 68px;
}
.blank {
  width: 58px;
}
.total {
  width: 72px;
}
.time {
  width: 42px;
}
.money {
  width: 54px;
}
.statusbar .money {
  padding-left: 8px;
  border: none;
}

/* task bar */
.taskbar {
  display: flex;
  align-items: center;
  gap: 2px;
  height: 30px;
  color: white;
  background: linear-gradient(#4a90f4, #2460dc 12%, #2258d4 80%, #1a44b0);
}
.start {
  width: 109px;
  height: 30px;
  margin-right: 8px;
  padding-right: 14px;
  gap: 4px;
  border-radius: 0 10px 10px 0;
  background: linear-gradient(#6cb86c, #3c963c 15%, #389038 75%, #2a742a);
  font-family: "Open Sans", sans-serif;
  font-size: 18px;
  font-weight: bold;
  font-style: italic;
}
.start svg {
  width: 20px;
  height: 20px;
}
.task {
  width: 158px;
  height: 24px;
  justify-content: flex-start;
  padding-left: 10px;
  gap: 3px;
  border-radius: 2px;
  background: linear-gradient(#64a0fa, #3c80f4 20%, #3878ee);
  white-space: nowrap;
}
.active {
  background: #1c4cb4;
}
.lang {
  margin-left: auto;
  padding-right: 12px;
}
.tray {
  display: flex;
  align-items: center;
  gap: 2px;
  height: 30px;
  padding-right: 13px;
  background: linear-gradient(#3cb4f8, #1490e8 15%, #108ce4 80%, #0c68b8);
}
.expand {
  margin-left: -9px;
}
.expand svg {
  width: 18px;
  height: 18px;
}
.ati {
  width: 16px;
  color: #e02020;
  font-size: 9px;
}
.mcafee {
  width: 16px;
  height: 16px;
  line-height: 16px;
  text-align: center;
  background-color: #c0102c;
  font-size: 13px;
}
.clock {
  padding-left: 4px;
}
```
